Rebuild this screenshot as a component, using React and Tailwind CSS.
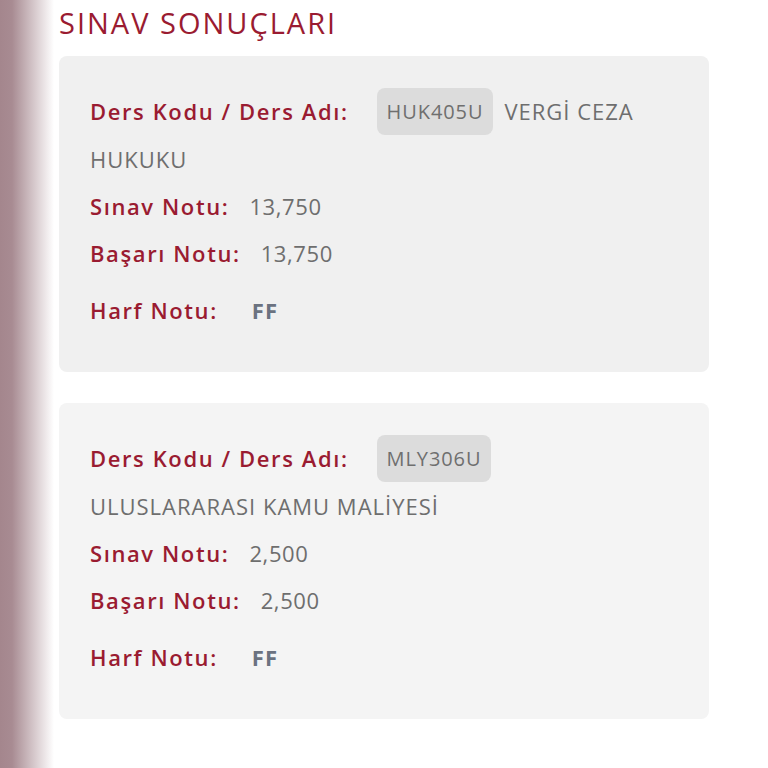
import React from 'react'

const results = [
  { code: 'HUK405U', nameTop: 'VERGİ CEZA', nameBottom: 'HUKUKU', exam: '13,750', success: '13,750', letter: 'FF', bg: 'bg-[#f0f0f0]' },
  { code: 'MLY306U', nameTop: '', nameBottom: 'ULUSLARARASI KAMU MALİYESİ', exam: '2,500', success: '2,500', letter: 'FF', bg: 'bg-[#f4f4f4]' },
]

function ResultCard({ r }) {
  return (
    <div className={`${r.bg} rounded-lg pt-8 pb-[38px] px-[31px] text-[22px]`}>
      <div className="h-[48px] flex items-start">
        <span className="h-[47px] flex items-center text-[#9a1b31] font-semibold tracking-[1.6px]">Ders Kodu / Ders Adı:</span>
        <span className="ml-[28px] h-[47px] px-[10px] flex items-center rounded-lg bg-[#dcdcdc] text-[#6f6f6f] text-[20px] tracking-[0.9px]">
          {r.code}
        </span>
        {r.nameTop && <span className="ml-[11px] h-[47px] flex items-center text-[#6e6e6e] tracking-[1px]">{r.nameTop}</span>}
      </div>
      <div className="h-[47px] flex items-center text-[#6e6e6e] tracking-[1px]">{r.nameBottom}</div>
      <div className="h-[47px] flex items-center">
        <span className="text-[#9a1b31] font-semibold tracking-[1.6px]">Sınav Notu:</span>
        <span className="ml-5 text-[#6e6e6e] tracking-[0.6px]">{r.exam}</span>
      </div>
      <div className="h-[47px] flex items-center">
        <span className="text-[#9a1b31] font-semibold tracking-[1.6px]">Başarı Notu:</span>
        <span className="ml-5 text-[#6e6e6e] tracking-[0.6px]">{r.success}</span>
      </div>
      <div className="mt-[9px] h-[48px] flex items-center">
        <span className="text-[#9a1b31] font-semibold tracking-[1.6px]">Harf Notu:</span>
        <span className="ml-[34px] text-[#6b7280] font-bold tracking-[1px]">{r.letter}</span>
      </div>
    </div>
  )
}

export default function App() {
  return (
    <div className="h-[768px] overflow-hidden bg-white flex" style={{ fontFamily: '"Open Sans", "Noto Sans", sans-serif' }}>
      {/* left faded strip */}
      <div className="w-[59px] shrink-0 bg-[linear-gradient(to_right,#a4868d_0px,#a88b92_12px,#ffffff_54px)]" />
      <div className="flex-1 pr-[59px]">
        <h1 className="h-[56px] pt-[3px] text-[29px] leading-[40px] text-[#9a1b31] tracking-[2px]">SINAV SONUÇLARI</h1>
        <div className="flex flex-col gap-[31px]">
          {results.map(r => <ResultCard key={r.code} r={r} />)}
        </div>
      </div>
    </div>
  )
}
